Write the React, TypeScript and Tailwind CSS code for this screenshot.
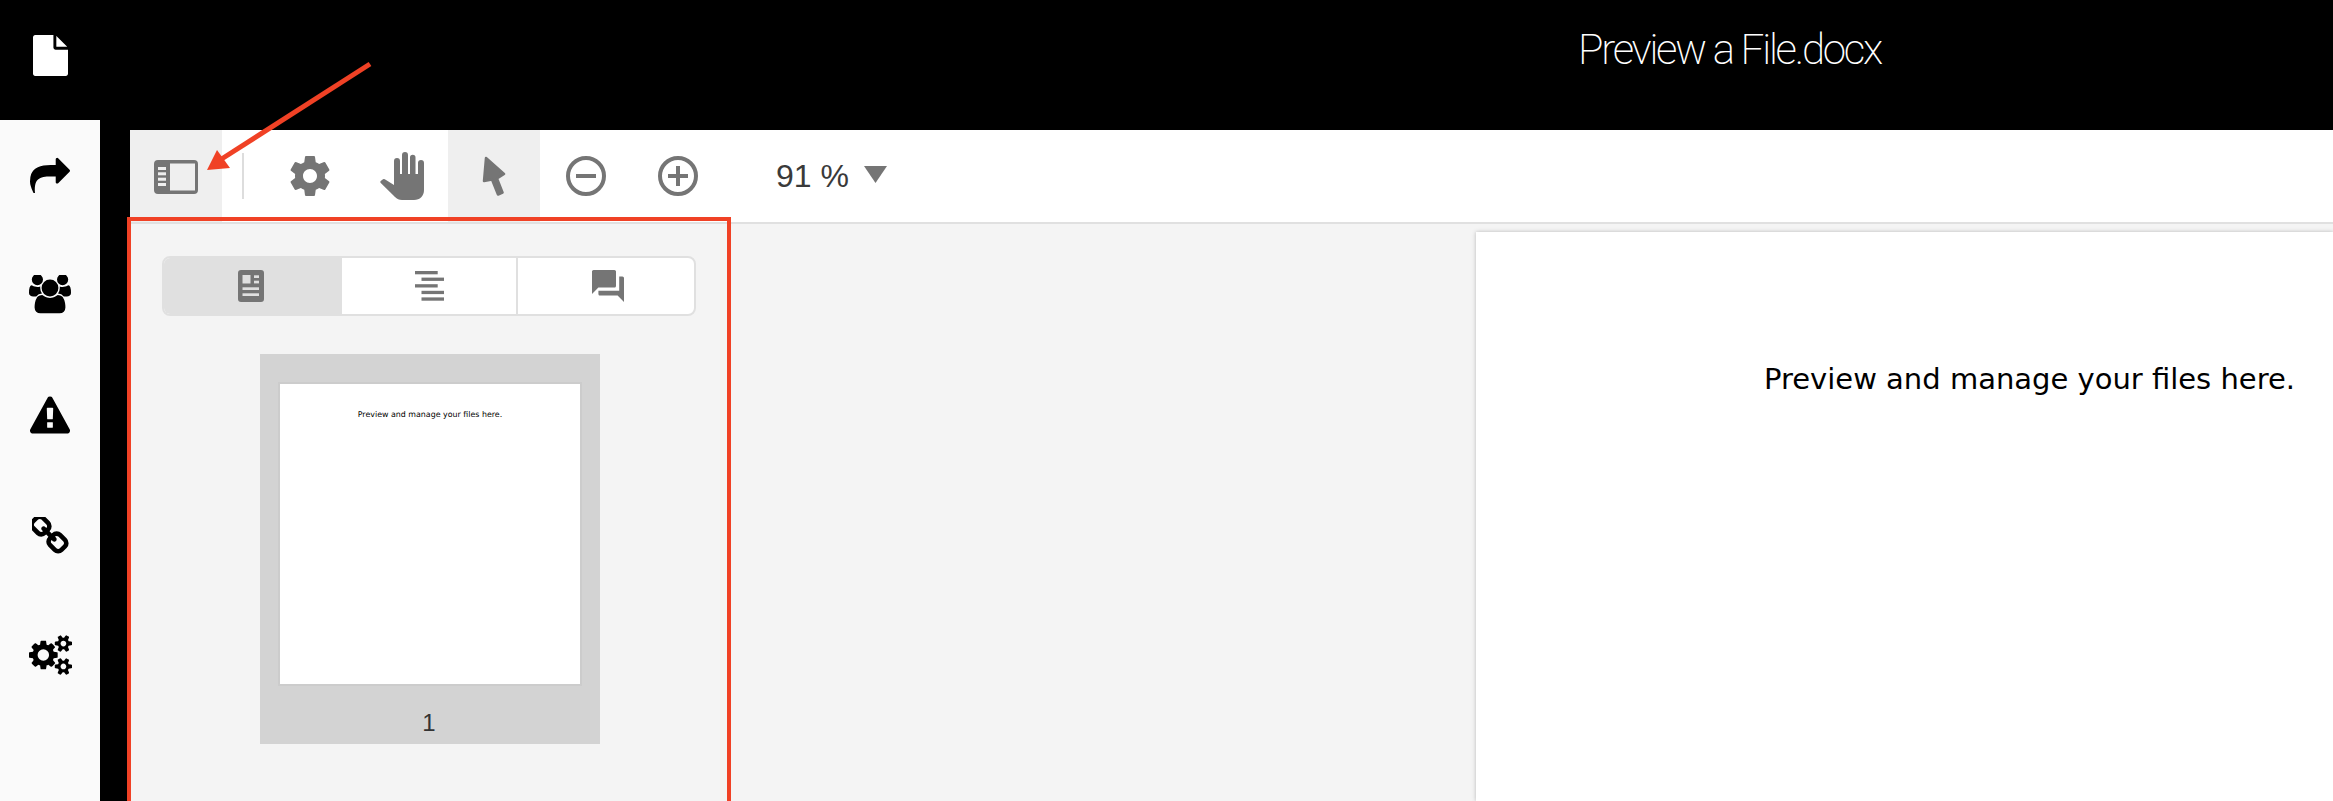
const LIGHT = '#757575';

function Fa({ d, box, w, h }: { d: string; box: string; w: string; h: string }) {
  return (
    <svg viewBox={box} className={`${w} ${h} fill-current block`}>
      <path d={d} />
    </svg>
  );
}

const filePath = 'M1152 512v-472q22 14 36 28l408 408q14 14 28 36h-472zm-128 32q0 40 28 68t68 28h544v1056q0 40-28 68t-68 28h-1344q-40 0-68-28t-28-68v-1600q0-40 28-68t68-28h800v544z';
const sharePath = 'M1792 640q0 26-19 45l-512 512q-19 19-45 19t-45-19-19-45v-256h-224q-98 0-175.5 6t-154 21.5-133 42.5-105.5 69.5-80 101-48.5 138.5-17.5 181q0 55 5 123 0 6 2.5 23.5t2.5 26.5q0 15-8.5 25t-23.5 10q-16 0-28-17-7-9-13-22t-13.5-30-10.5-24q-127-285-127-451 0-199 53-333 162-403 875-403h224v-256q0-26 19-45t45-19 45 19l512 512q19 19 19 45z';
const usersPath = 'M593 896q-162 5-265 128h-134q-82 0-138-40.5t-56-118.5q0-353 124-353 6 0 43.5 21t97.5 42.5 119 21.5q67 0 133-23-5 37-5 66 0 139 81 256zm1071 637q0 120-73 189.5t-194 69.5h-874q-121 0-194-69.5t-73-189.5q0-53 3.5-103.5t14-109 26.5-108.5 43-97.5 62-81 85.5-53.5 111.5-20q10 0 43 21.5t73 48 107 48 135 21.5 135-21.5 107-48 73-48 43-21.5q61 0 111.5 20t85.5 53.5 62 81 43 97.5 26.5 108.5 14 109 3.5 103.5zm-1024-1277q0 106-75 181t-181 75-181-75-75-181 75-181 181-75 181 75 75 181zm704 384q0 159-112.5 271.5t-271.5 112.5-271.5-112.5-112.5-271.5 112.5-271.5 271.5-112.5 271.5 112.5 112.5 271.5zm576 225q0 78-56 118.5t-138 40.5h-134q-103-123-265-128 81-117 81-256 0-29-5-66 66 23 133 23 59 0 119-21.5t97.5-42.5 43.5-21q124 0 124 353zm-128-609q0 106-75 181t-181 75-181-75-75-181 75-181 181-75 181 75 75 181z';
const warnPath = 'M1024 1375v-190q0-14-9.5-23.5t-22.5-9.5h-192q-13 0-22.5 9.5t-9.5 23.5v190q0 14 9.5 23.5t22.5 9.5h192q13 0 22.5-9.5t9.5-23.5zm-2-374l18-459q0-12-10-19-13-11-24-11h-220q-11 0-24 11-10 7-10 21l17 457q0 10 10 16.5t24 6.5h185q14 0 23.5-6.5t10.5-16.5zm-14-934l768 1408q35 63-2 126-17 29-46.5 46t-63.5 17h-1536q-34 0-63.5-17t-46.5-46q-37-63-2-126l768-1408q17-31 47-49t65-18 65 18 47 49z';
const linkPath = 'M1456 1216q0-40-28-68l-208-208q-28-28-68-28-42 0-72 32 3 3 19 18.5t21.5 21.5 15 19 13 25.5 3.5 27.5q0 40-28 68t-68 28q-15 0-27.5-3.5t-25.5-13-19-15-21.5-21.5-18.5-19q-33 31-33 73 0 40 28 68l206 207q27 27 68 27 40 0 68-26l147-146q28-28 28-67zm-703-705q0-40-28-68l-206-207q-28-28-68-28-39 0-68 27l-147 146q-28 28-28 67 0 40 28 68l208 208q27 27 68 27 42 0 72-31-3-3-19-18.5t-21.5-21.5-15-19-13-25.5-3.5-27.5q0-40 28-68t68-28q15 0 27.5 3.5t25.5 13 19 15 21.5 21.5 18.5 19q33-31 33-73zm895 705q0 120-85 203l-147 146q-83 83-203 83-121 0-204-85l-206-207q-83-83-83-203 0-123 88-209l-88-88q-86 88-208 88-120 0-204-84l-208-208q-84-84-84-204t85-203l147-146q83-83 203-83 121 0 204 85l206 207q83 83 83 203 0 123-88 209l88 88q86-88 208-88 120 0 204 84l208 208q84 84 84 204z';
const cogsPath = 'M896 896q0-106-75-181t-181-75-181 75-75 181 75 181 181 75 181-75 75-181zm768 512q0-52-38-90t-90-38-90 38-38 90q0 53 37.5 90.5t90.5 37.5 90.5-37.5 37.5-90.5zm0-1024q0-52-38-90t-90-38-90 38-38 90q0 53 37.5 90.5t90.5 37.5 90.5-37.5 37.5-90.5zm-384 421v185q0 10-7 19.5t-16 10.5l-155 24q-11 35-32 76 34 48 90 115 7 11 7 20 0 12-7 19-23 30-82.5 89.5t-78.5 59.5q-11 0-21-7l-115-90q-37 19-77 31-11 108-23 155-7 24-30 24h-186q-11 0-20-7.5t-10-17.5l-23-153q-34-10-75-31l-118 89q-7 7-20 7-11 0-21-8-144-133-144-160 0-9 7-19 10-14 41-53t47-61q-23-44-35-82l-152-24q-10-1-17-9.5t-7-19.5v-185q0-10 7-19.5t16-10.5l155-24q11-35 32-76-34-48-90-115-7-11-7-20 0-12 7-20 22-30 82-89t79-59q11 0 21 7l115 90q34-18 77-32 11-108 23-154 7-24 30-24h186q11 0 20 7.5t10 17.5l23 153q34 10 75 31l118-89q8-7 20-7 11 0 21 8 144 133 144 160 0 8-7 19-12 16-42 54t-45 60q23 48 34 82l152 23q10 2 17 10.5t7 19.5zm640 533v140q0 16-149 31-12 27-30 52 51 113 51 138 0 4-4 7-122 71-124 71-8 0-46-47t-52-68q-20 2-30 2t-30-2q-14 21-52 68t-46 47q-2 0-124-71-4-3-4-7 0-25 51-138-18-25-30-52-149-15-149-31v-140q0-16 149-31 13-29 30-52-51-113-51-138 0-4 4-7 4-2 35-20t59-34 30-16q8 0 46 46.5t52 67.5q20-2 30-2t30 2q51-71 92-112l6-2q4 0 124 70 4 3 4 7 0 25-51 138 17 23 30 52 149 15 149 31zm0-1024v140q0 16-149 31-12 27-30 52 51 113 51 138 0 4-4 7-122 71-124 71-8 0-46-47t-52-68q-20 2-30 2t-30-2q-14 21-52 68t-46 47q-2 0-124-71-4-3-4-7 0-25 51-138-18-25-30-52-149-15-149-31v-140q0-16 149-31 13-29 30-52-51-113-51-138 0-4 4-7 4-2 35-20t59-34 30-16q8 0 46 46.5t52 67.5q20-2 30-2t30 2q51-71 92-112l6-2q4 0 124 70 4 3 4 7 0 25-51 138 17 23 30 52 149 15 149 31z';

function PanelIcon() {
  return (
    <svg viewBox="0 0 44 34" className="w-[44px] h-[34px] block mt-[2px]">
      <path fill={LIGHT} fillRule="evenodd" d="M4 0h36a4 4 0 0 1 4 4v26a4 4 0 0 1-4 4H4a4 4 0 0 1-4-4V4a4 4 0 0 1 4-4zM16 3.500v27h25v-27z" />
      <rect x="4" y="7" width="8" height="3" fill="#efefef" />
      <rect x="4" y="12.300" width="8" height="3" fill="#efefef" />
      <rect x="4" y="17.700" width="8" height="3" fill="#efefef" />
      <rect x="4" y="23" width="8" height="3" fill="#efefef" />
    </svg>
  );
}

function GearIcon() {
  return (
    <svg viewBox="2 2 20 20" className="w-[40px] h-[40px] block" fill={LIGHT}>
      <path d="M19.43 12.98c.04-.32.07-.64.07-.98s-.03-.66-.07-.98l2.11-1.65c.19-.15.24-.42.12-.64l-2-3.46c-.12-.22-.39-.3-.61-.22l-2.49 1c-.52-.4-1.08-.73-1.69-.98l-.38-2.65C14.46 2.18 14.25 2 14 2h-4c-.25 0-.46.18-.49.42l-.38 2.65c-.61.25-1.17.59-1.69.98l-2.49-1c-.23-.09-.49 0-.61.22l-2 3.46c-.13.22-.07.49.12.64l2.11 1.65c-.04.32-.07.65-.07.98s.03.66.07.98l-2.11 1.65c-.19.15-.24.42-.12.64l2 3.46c.12.22.39.3.61.22l2.49-1c.52.4 1.08.73 1.69.98l.38 2.65c.03.24.24.42.49.42h4c.25 0 .46-.18.49-.42l.38-2.65c.61-.25 1.17-.59 1.69-.98l2.49 1c.23.09.49 0 .61-.22l2-3.46c.12-.22.07-.49-.12-.64l-2.11-1.65zM12 15.500c-1.93 0-3.500-1.570-3.500-3.500s1.570-3.500 3.500-3.500 3.500 1.570 3.500 3.500-1.570 3.500-3.500 3.500z" />
    </svg>
  );
}

function HandIcon() {
  return (
    <svg viewBox="0 0 44 48" className="w-[44px] h-[48px] block" fill={LIGHT}>
      <path d="M14 9a3 3 0 0 1 6 0V22h2V3a3 3 0 0 1 6 0V22h2V5.500a2.750 2.750 0 0 1 5.500 0V22H38V11a3 3 0 0 1 6 0V38c0 6-4 10-10 10H22c-3 0-5-1-7-3L.8 31a1.500 1.500 0 0 1 .2-2.200l2-1.500a1.500 1.500 0 0 1 1.800 0L14 33z" />
    </svg>
  );
}

function PointerIcon() {
  return (
    <svg viewBox="0 0 24 40" className="w-[24px] h-[40px] block" fill={LIGHT} stroke={LIGHT} strokeWidth="2.500" strokeLinejoin="round">
      <path d="M4 2L22 18l-7 4.500 5.500 14-4.500 2L10 23.500 2 25z" />
    </svg>
  );
}

function ZoomCircle({ plus }: { plus?: boolean }) {
  return (
    <svg viewBox="0 0 40 40" className="w-[40px] h-[40px] block" fill="none" stroke={LIGHT}>
      <circle cx="20" cy="20" r="18" strokeWidth="4" />
      <path d={plus ? 'M10 20h20M20 10v20' : 'M10 20h20'} strokeWidth="4" />
    </svg>
  );
}

function NewsIcon() {
  return (
    <svg viewBox="0 0 26 32" className="w-[26px] h-[32px] block">
      <rect width="26" height="32" rx="3" fill={LIGHT} />
      <rect x="4.500" y="5" width="8" height="8.500" fill="#e0e0e0" />
      <rect x="16" y="5.300" width="5" height="2.700" fill="#e0e0e0" />
      <rect x="16" y="10.700" width="5" height="2.700" fill="#e0e0e0" />
      <rect x="4.500" y="17.300" width="16.500" height="2.700" fill="#e0e0e0" />
      <rect x="4.500" y="23.300" width="16.500" height="2.700" fill="#e0e0e0" />
    </svg>
  );
}

function OutlineIcon() {
  return (
    <svg viewBox="0 0 29 30" className="w-[29px] h-[30px] block" fill={LIGHT}>
      <rect x="0" y="0" width="22.700" height="3.300" />
      <rect x="6.500" y="6.600" width="22.500" height="3.300" />
      <rect x="0" y="13.200" width="22.700" height="3.300" />
      <rect x="6.500" y="19.800" width="22.500" height="3.300" />
      <rect x="6.500" y="26.400" width="22.500" height="3.300" />
    </svg>
  );
}

function CommentsIcon() {
  return (
    <svg viewBox="2 2 20 20" className="w-[32px] h-[32px] block" fill={LIGHT}>
      <path d="M21 6h-2v9H6v2c0 .55.45 1 1 1h11l4 4V7c0-.55-.45-1-1-1zm-4 6V3c0-.55-.45-1-1-1H3c-.55 0-1 .45-1 1v14l4-4h10c.55 0 1-.45 1-1z" />
    </svg>
  );
}

function Triangle() {
  return (
    <svg viewBox="0 0 23 17" className="w-[23px] h-[17px] block -mt-[3px]" fill={LIGHT}>
      <path d="M0 0h23L11.500 17z" />
    </svg>
  );
}

const dejavu = { fontFamily: '"DejaVu Sans", sans-serif' };

export default function App() {
  return (
    <div
      className="relative w-[2333px] h-[801px] overflow-hidden bg-black flex"
      style={{ fontFamily: '"Liberation Sans", Arial, sans-serif' }}
    >
      {/* Left column */}
      <div className="w-[100px] shrink-0 flex flex-col">
        <div className="h-[120px] shrink-0 pt-[35px] flex justify-center text-white">
          <Fa d={filePath} box="128 0 1536 1792" w="w-[35px]" h="h-[41px]" />
        </div>
        <div className="flex-1 bg-[#fafafa] pt-[35px] flex flex-col items-center gap-[80px] text-black">
          <div className="h-[40px] flex items-center"><Fa d={sharePath} box="0 128 1792 1408" w="w-[40px]" h="h-[36px]" /></div>
          <div className="h-[40px] flex items-center"><Fa d={usersPath} box="0 128 1920 1664" w="w-[42px]" h="h-[40px]" /></div>
          <div className="h-[40px] flex items-center"><Fa d={warnPath} box="0 0 1792 1664" w="w-[40px]" h="h-[38px]" /></div>
          <div className="h-[40px] flex items-center"><Fa d={linkPath} box="128 128 1536 1536" w="w-[37px]" h="h-[37px]" /></div>
          <div className="h-[40px] flex items-center"><Fa d={cogsPath} box="0 128 1920 1536" w="w-[43px]" h="h-[40px]" /></div>
        </div>
      </div>

      {/* Right column */}
      <div className="flex-1 flex flex-col min-w-0">
        <div className="h-[130px] shrink-0 pl-[1478px] pt-[26px]">
          <div
            className="text-white text-[42px] leading-[48px] whitespace-nowrap tracking-[-2.25px] font-extralight"
            style={{ fontFamily: 'Roboto, "Liberation Sans", sans-serif' }}
          >
            Preview a File.docx
          </div>
        </div>

        <div className="flex-1 ml-[30px] flex flex-col min-h-0">
          {/* Toolbar */}
          <div className="h-[94px] shrink-0 bg-white border-b-2 border-[#e0e0e0] flex items-center text-[32px]">
            <div className="w-[92px] h-[92px] bg-[#efefef] flex items-center justify-center shrink-0">
              <PanelIcon />
            </div>
            <div className="w-[2px] h-[46px] bg-[#dddddd] ml-[20px] shrink-0" />
            <div className="ml-[46px] shrink-0"><GearIcon /></div>
            <div className="ml-[50px] shrink-0"><HandIcon /></div>
            <div className="ml-[24px] w-[92px] h-[92px] bg-[#efefef] flex items-center justify-center shrink-0">
              <PointerIcon />
            </div>
            <div className="ml-[26px] shrink-0"><ZoomCircle /></div>
            <div className="ml-[52px] shrink-0"><ZoomCircle plus /></div>
            <div className="ml-[78px] text-[#3a3a3a] leading-none shrink-0">91 %</div>
            <div className="ml-[15px] shrink-0"><Triangle /></div>
          </div>

          {/* Body */}
          <div className="flex-1 bg-[#f4f4f4] flex min-h-0 overflow-hidden">
            <div className="w-[600px] shrink-0 pl-[32px] pt-[32px]">
              <div className="w-[534px] h-[60px] rounded-[8px] border-2 border-[#e0e0e0] bg-white flex overflow-hidden">
                <div className="w-[178px] bg-[#e0e0e0] flex items-center justify-center pr-[4px]"><NewsIcon /></div>
                <div className="w-[176px] border-r-2 border-[#e0e0e0] flex items-center justify-center"><OutlineIcon /></div>
                <div className="flex-1 flex items-center justify-center pl-[3px]"><CommentsIcon /></div>
              </div>
              <div className="ml-[98px] mt-[38px] w-[340px] h-[390px] bg-[#d3d3d3] px-[20px] pt-[30px] flex flex-col items-center">
                <div className="w-[300px] h-[300px] shrink-0 bg-white shadow-[0_0_0_2px_#cccccc] text-center pt-[26px]">
                  <div className="text-[7.9px] leading-[10px] text-black" style={dejavu}>Preview and manage your files here.</div>
                </div>
                <div className="mt-[25px] pr-[2px] text-[24px] leading-[28px] text-[#333333]">1</div>
              </div>
            </div>
            <div className="flex-1 pl-[746px] pt-[8px] min-w-0">
              <div className="h-full bg-white shadow-[0_0_4px_rgba(0,0,0,0.25)] pl-[288px] pt-[125px]">
                <div className="text-[29px] leading-[44px] text-black whitespace-nowrap" style={dejavu}>Preview and manage your files here.</div>
              </div>
            </div>
          </div>
        </div>
      </div>

      {/* Annotation overlay */}
      <div className="absolute left-[127px] top-[217px] w-[604px] h-[600px] border-4 border-[#f04125] pointer-events-none" />
      <svg className="absolute left-0 top-0 w-[400px] h-[200px] pointer-events-none" viewBox="0 0 400 200">
        <path d="M370 64L220 160" stroke="#f04125" strokeWidth="5" fill="none" />
        <path d="M207 170L217 150L230 168z" fill="#f04125" />
      </svg>
    </div>
  );
}
